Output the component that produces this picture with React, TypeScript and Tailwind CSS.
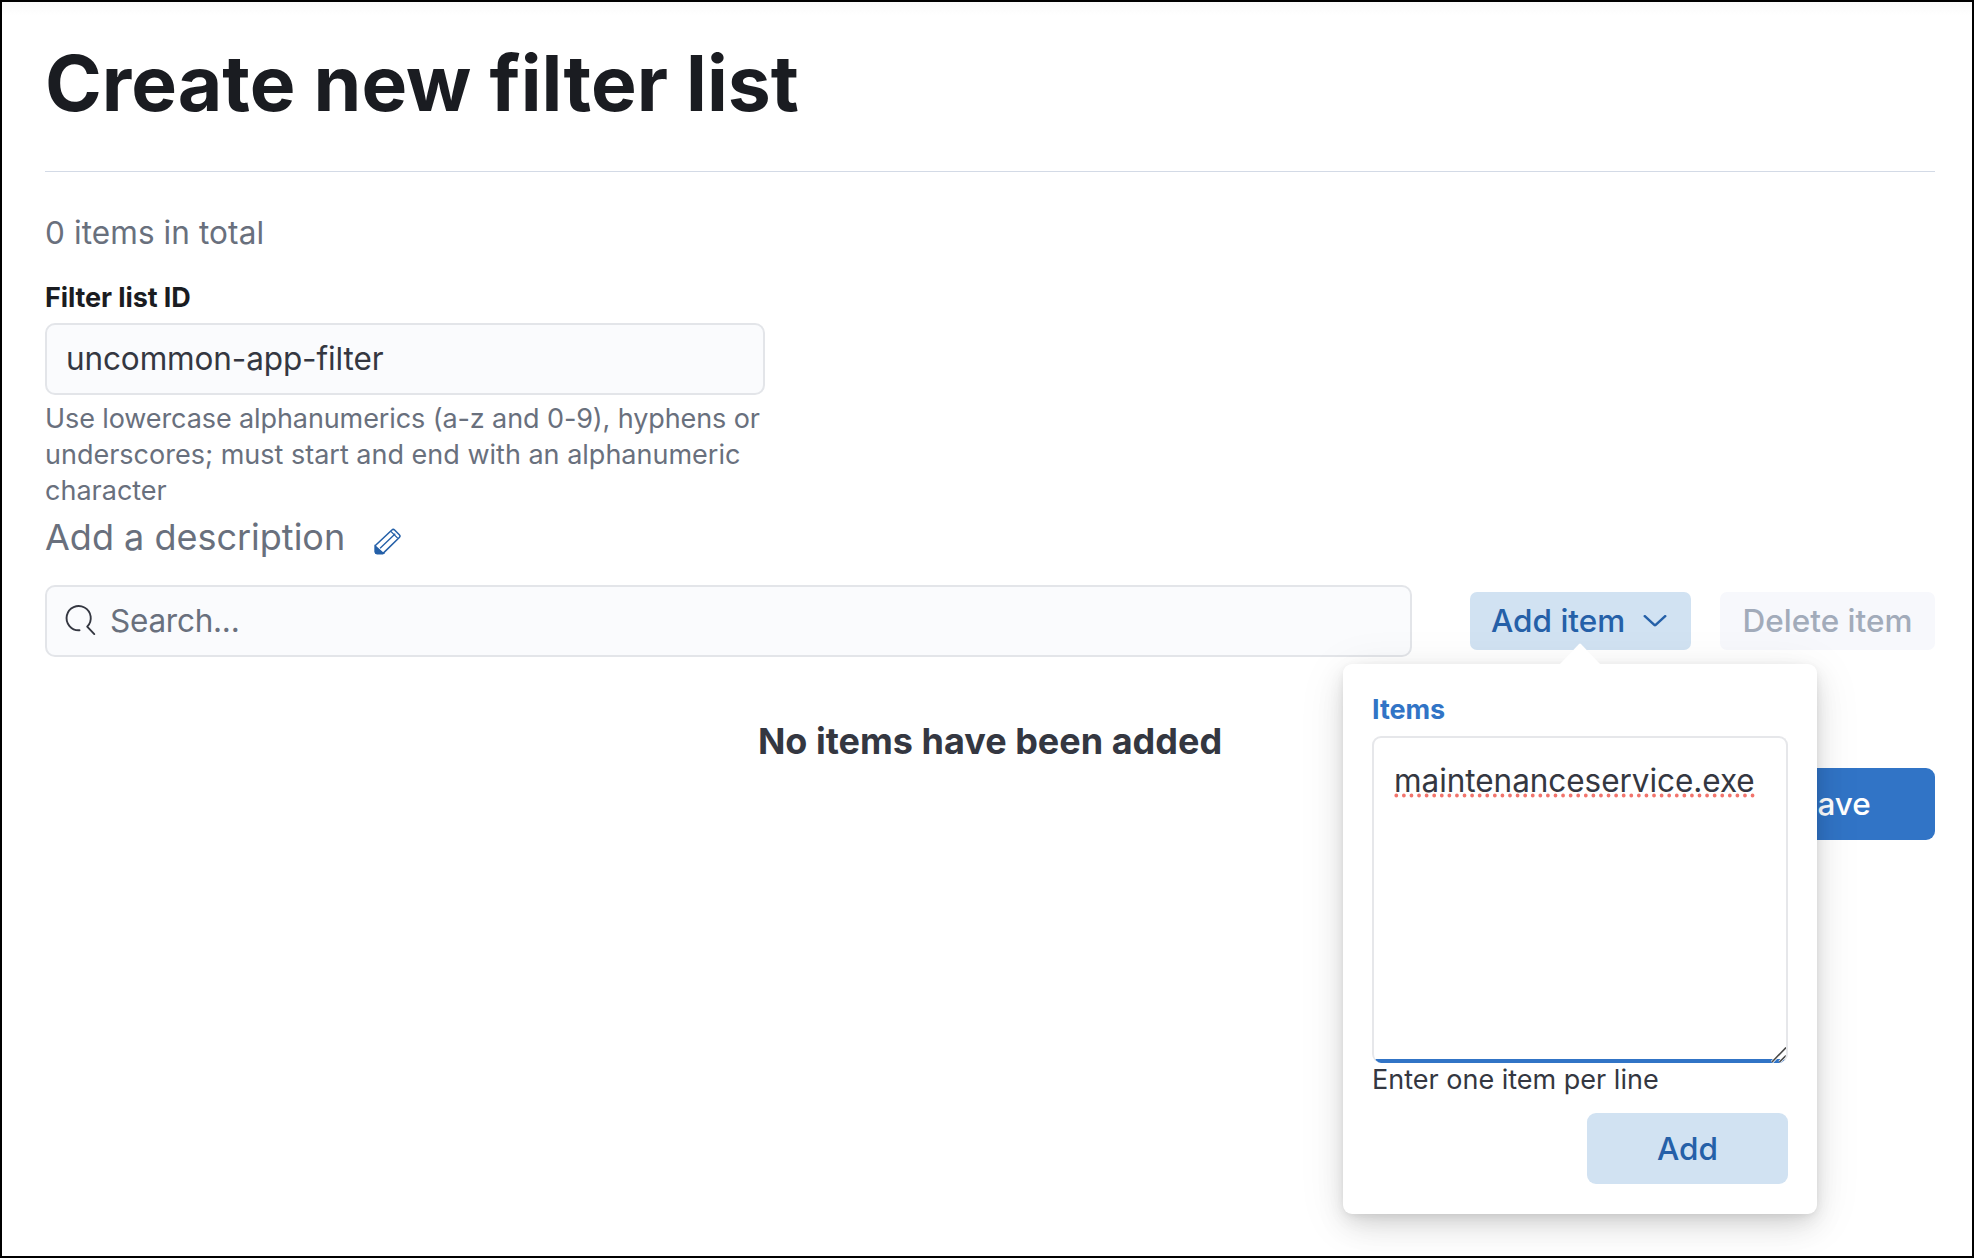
function PencilIcon() {
  return (
    <svg viewBox="42 39 80 80" className="h-[27px] w-[27px]" fill="none" stroke="#2560a8" strokeWidth="4.6" aria-hidden="true">
      <path d="M46 91 L95 45 Q99 41 103 45 L117 59 Q121 63 117 67 L68 115 H51 Q46 115 46 110 Z" />
      <path d="M60 99 L105 56 M92 49 L112 69" strokeWidth="4" />
      <path d="M46 93 L69 114 H51 Q46 114 46 110 Z" fill="#2560a8" />
    </svg>
  );
}

function SearchIcon() {
  return (
    <svg viewBox="0 0 36 36" className="h-[36px] w-[36px]" fill="none" stroke="#343741" strokeWidth="1.9" aria-hidden="true">
      <path d="M17.5 27.2 A12.1 12.1 0 1 1 25.2 23.7 L32.3 31.1" strokeLinecap="round" strokeLinejoin="round" />
    </svg>
  );
}

function ChevronIcon() {
  return (
    <svg viewBox="0 0 24 12" className="h-[12px] w-[24px]" fill="none" stroke="#2560a8" strokeWidth="2.5" strokeLinecap="round" strokeLinejoin="round" aria-hidden="true">
      <path d="M1.8 1.2 L11.3 9.9 Q12 10.5 12.7 9.9 L22.2 1.2" />
    </svg>
  );
}

function AddItemPopover() {
  return (
    <div className="absolute top-[72px] left-[-127px] z-10 h-[550px] w-[474px] rounded-[9px] bg-white px-[29px] pt-[28px] text-left shadow-[0_2px_9px_-2px_rgba(0,0,0,0.08),0_6px_18px_-2px_rgba(0,0,0,0.07),0_13px_30px_-2px_rgba(0,0,0,0.1),0_8px_50px_rgba(0,0,0,0.08)]">
      <svg viewBox="0 0 42 22" className="absolute top-[-21px] left-[216px] h-[22px] w-[42px]" aria-hidden="true">
        <path d="M0 22 L20 1 Q21 0 22 1 L42 22 Z" fill="#fff" />
      </svg>
      <div className="text-[27px] leading-[36px] font-[650] tracking-[-0.1px] text-[#3174c6]">Items</div>
      <div className="relative mt-[8px] h-[327px] w-[416px] overflow-hidden rounded-[9px] border-2 border-b-0 border-[#e6e7ea] pt-[19px] pl-[20px]">
        <span className="relative inline-block text-[31.5px] leading-[48px] tracking-[-0.05px] whitespace-nowrap text-[#343741]">
          maintenanceservice.exe
          <svg className="absolute top-[36px] left-0 h-[5px] w-[362px]" aria-hidden="true">
            <line x1="2.3" y1="2.5" x2="359" y2="2.5" stroke="#f2746c" strokeWidth="3.8" strokeLinecap="round" strokeDasharray="0 7.58" />
          </svg>
        </span>
        <div className="absolute right-0 bottom-0 left-0 h-[4px] bg-[#3174c6]" />
        <svg viewBox="0 0 16 18" className="absolute right-0 bottom-0 h-[18px] w-[16px]" fill="none" aria-hidden="true">
          <path d="M2 17 L16 3 M9.5 17 L16 10.5" stroke="#fff" strokeWidth="3" />
          <path d="M2 17 L16 2.5 M9.5 17 L16 10.5" stroke="#4a4a4a" strokeWidth="1.6" />
        </svg>
      </div>
      <div className="mt-[-1px] text-[27px] leading-[36px] text-[#343741]">Enter one item per line</div>
      <div className="mt-[15px] flex justify-end">
        <button className="h-[71px] w-[201px] rounded-[9px] bg-[#d1e2f2] text-[31.5px] leading-[48px] font-medium text-[#2560a8]">Add</button>
      </div>
    </div>
  );
}

export default function App() {
  return (
    <div className="h-[1258px] w-[1974px] overflow-hidden border-2 border-black bg-[linear-gradient(to_bottom,#f9f9f9,#fff_13px)] px-[43px] pt-[36px] font-['Inter',sans-serif]">
      <div className="w-[1890px]">
        <h1 className="text-[76.8px] leading-[92px] font-bold whitespace-nowrap text-[#1a1c21]">Create new filter list</h1>
        <hr className="mt-[41px] h-px border-0 bg-[#d3dae6]" />
        <p className="mt-[37px] text-[31.5px] leading-[48px] tracking-[0.1px] text-[#69707d]">0 items in total</p>

        <div className="mt-[23px] text-[27px] leading-[36px] font-[650] tracking-[-0.1px] text-[#1a1c21]">Filter list ID</div>
        <div className="mt-[7px] flex h-[72px] w-[720px] items-center rounded-[10px] border-2 border-[#e3e5e9] bg-[#fafbfd] pl-[19px] text-[31.5px] leading-[48px] tracking-[-0.12px] text-[#343741]">
          uncommon-app-filter
        </div>
        <p className="mt-[6px] text-[27px] leading-[36px] whitespace-nowrap text-[#69707d]">
          <span className="tracking-[-0.1px]">Use lowercase alphanumerics (a-z and 0-9), hyphens or</span>
          <br />
          underscores; must start and end with an alphanumeric
          <br />
          character
        </p>

        <div className="mt-px flex h-[54px] items-center gap-[29px] text-[36px] text-[#69707d]">
          <span className="leading-[54px]">Add a description</span>
          <button className="pt-[9px]" aria-label="Edit description">
            <PencilIcon />
          </button>
        </div>

        <div className="mt-[21px] flex h-[72px] items-center">
          <div className="flex h-[72px] w-[1367px] items-center gap-[12px] rounded-[10px] border-2 border-[#e3e5e9] bg-[#fafbfd] pl-[15px] text-[31.5px] leading-[48px] text-[#69707d]">
            <SearchIcon />
            <span className="tracking-[-0.25px]">Search...</span>
          </div>
          <div className="relative ml-[58px]">
            <button className="flex h-[58px] w-[221px] items-center rounded-[7px] bg-[#d1e2f2] pl-[21px] text-[31.5px] leading-[48px] font-medium whitespace-nowrap text-[#2560a8]">
              Add item
              <span className="ml-[18px]">
                <ChevronIcon />
              </span>
            </button>
            <AddItemPopover />
          </div>
          <button className="ml-[29px] h-[58px] w-[215px] rounded-[7px] bg-[#f7f8fc] text-[31.5px] leading-[48px] font-medium whitespace-nowrap text-[#a2abba]" disabled>
            Delete item
          </button>
        </div>

        <h2 className="mt-[57px] text-center text-[36px] leading-[54px] font-bold text-[#343741]">No items have been added</h2>
        <div className="flex justify-end">
          <button className="h-[72px] w-[202px] rounded-[9px] bg-[#3174c6] text-[31.5px] leading-[48px] font-medium text-white">Save</button>
        </div>
      </div>
    </div>
  );
}
